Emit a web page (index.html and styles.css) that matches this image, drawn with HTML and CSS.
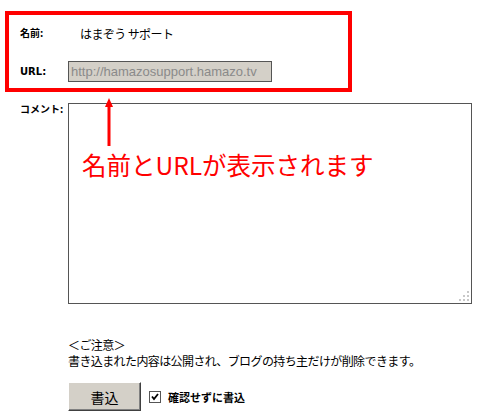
FILE: index.html
```html
<!DOCTYPE html>
<html lang="ja">
<head>
    <meta charset="UTF-8">
    <title>コメント</title>
    <link rel="stylesheet" href="styles.css">
</head>
<body>
    <div class="page">
        <form class="comment-form">
            <div class="row row-name">
                <span class="label">名前:</span>
                <span class="name-value">はまぞう サポート</span>
            </div>
            <div class="row row-url">
                <span class="label label-latin">URL:</span>
                <input class="url-input" type="text" value="http://hamazosupport.hamazo.tv" disabled>
            </div>
            <div class="row row-comment">
                <span class="label">コメント:</span>
                <div class="comment-box">
                    <textarea class="comment-text"></textarea>
                    <!-- resize grip -->
                    <svg class="grip" width="12" height="12" viewBox="0 0 12 12">
                        <rect x="9" y="1" width="2" height="2" fill="#c8c8c8"/>
                        <rect x="5" y="5" width="2" height="2" fill="#c8c8c8"/>
                        <rect x="9" y="5" width="2" height="2" fill="#c8c8c8"/>
                        <rect x="1" y="9" width="2" height="2" fill="#c8c8c8"/>
                        <rect x="5" y="9" width="2" height="2" fill="#c8c8c8"/>
                        <rect x="9" y="9" width="2" height="2" fill="#c8c8c8"/>
                    </svg>
                    <!-- annotation -->
                    <svg class="callout-arrow" width="10" height="48" viewBox="0 0 10 48">
                        <polygon points="5,0 9,9 1,9" fill="#ff0000"/>
                        <rect x="3.5" y="7" width="3" height="41" fill="#ff0000"/>
                    </svg>
                    <p class="callout-text">名前とURLが表示されます</p>
                </div>
            </div>
            <div class="notice">
                <p>＜ご注意＞</p>
                <p>書き込まれた内容は公開され、ブログの持ち主だけが削除できます。</p>
            </div>
            <div class="submit-row">
                <button type="button" class="submit-button">書込</button>
                <label class="skip-confirm">
                    <svg class="check" width="12" height="12" viewBox="0 0 12 12">
                        <rect x="0.5" y="0.5" width="11" height="11" fill="#fff" stroke="#555"/>
                        <polyline points="3,5.5 5,8 9,3" fill="none" stroke="#000" stroke-width="1.8"/>
                    </svg>
                    確認せずに書込
                </label>
            </div>
        </form>
        <div class="highlight-box"></div>
    </div>
</body>
</html>
```

FILE: styles.css
```css
body {
    margin: 0;
    background-color: #fff;
    font-family: "Noto Sans CJK JP", sans-serif;
    color: #000;
}
.page {
    position: relative;
    width: 500px;
    height: 417px;
}
.comment-form {
    padding: 22px 0 0 20px;
}
.row {
    display: flex;
    align-items: center;
}
.label {
    width: 48px;
    flex-shrink: 0;
    font-size: 10px;
    font-weight: bold;
    line-height: 12px;
}
.label-latin {
    font-family: "DejaVu Sans", sans-serif;
    font-size: 10px;
}
.row-name {
    height: 22px;
    margin-bottom: 17px;
}
.name-value {
    margin-left: 12px;
    font-size: 12px;
    letter-spacing: -0.6px;
}
.row-url {
    height: 21px;
    margin-bottom: 21px;
}
.url-input {
    width: 204px;
    height: 21px;
    box-sizing: border-box;
    margin: 0;
    padding: 0 2px;
    border: 1px solid #555;
    background-color: #d4d0c8;
    color: #8a8a8a;
    font-family: "Liberation Sans", sans-serif;
    font-size: 13px;
}
.row-comment {
    align-items: flex-start;
}
.comment-box {
    position: relative;
    width: 404px;
    height: 201px;
}
.comment-text {
    display: block;
    width: 100%;
    height: 100%;
    box-sizing: border-box;
    margin: 0;
    border: 1px solid #555;
    resize: none;
    background-color: #fff;
}
.grip {
    position: absolute;
    right: 2px;
    bottom: 2px;
}
.callout-arrow {
    position: absolute;
    left: 36px;
    top: -5px;
}
.callout-text {
    position: absolute;
    left: 14px;
    top: 49px;
    margin: 0;
    color: #ff0000;
    font-size: 24.5px;
    line-height: 25px;
    white-space: nowrap;
}
.notice {
    margin: 33px 0 0 48px;
    font-size: 12px;
    line-height: 16px;
    letter-spacing: -0.6px;
}
.notice p {
    margin: 0;
}
.submit-row {
    display: flex;
    align-items: center;
    margin: 13px 0 0 48px;
}
.submit-button {
    width: 73px;
    height: 29px;
    margin: 0;
    padding: 0;
    background-color: #d4d0c8;
    border: 1px solid;
    border-color: #fff #404040 #404040 #fff;
    box-shadow: inset -1px -1px #808080;
    font-family: "Noto Sans CJK JP", sans-serif;
    font-size: 14px;
    color: #000;
}
.skip-confirm {
    display: flex;
    align-items: center;
    margin-left: 8px;
    font-size: 11px;
    font-weight: bold;
}
.check {
    margin-right: 7px;
}
.highlight-box {
    position: absolute;
    left: 5px;
    top: 11px;
    width: 347px;
    height: 81px;
    box-sizing: border-box;
    border: 4px solid #ff0000;
}
```
